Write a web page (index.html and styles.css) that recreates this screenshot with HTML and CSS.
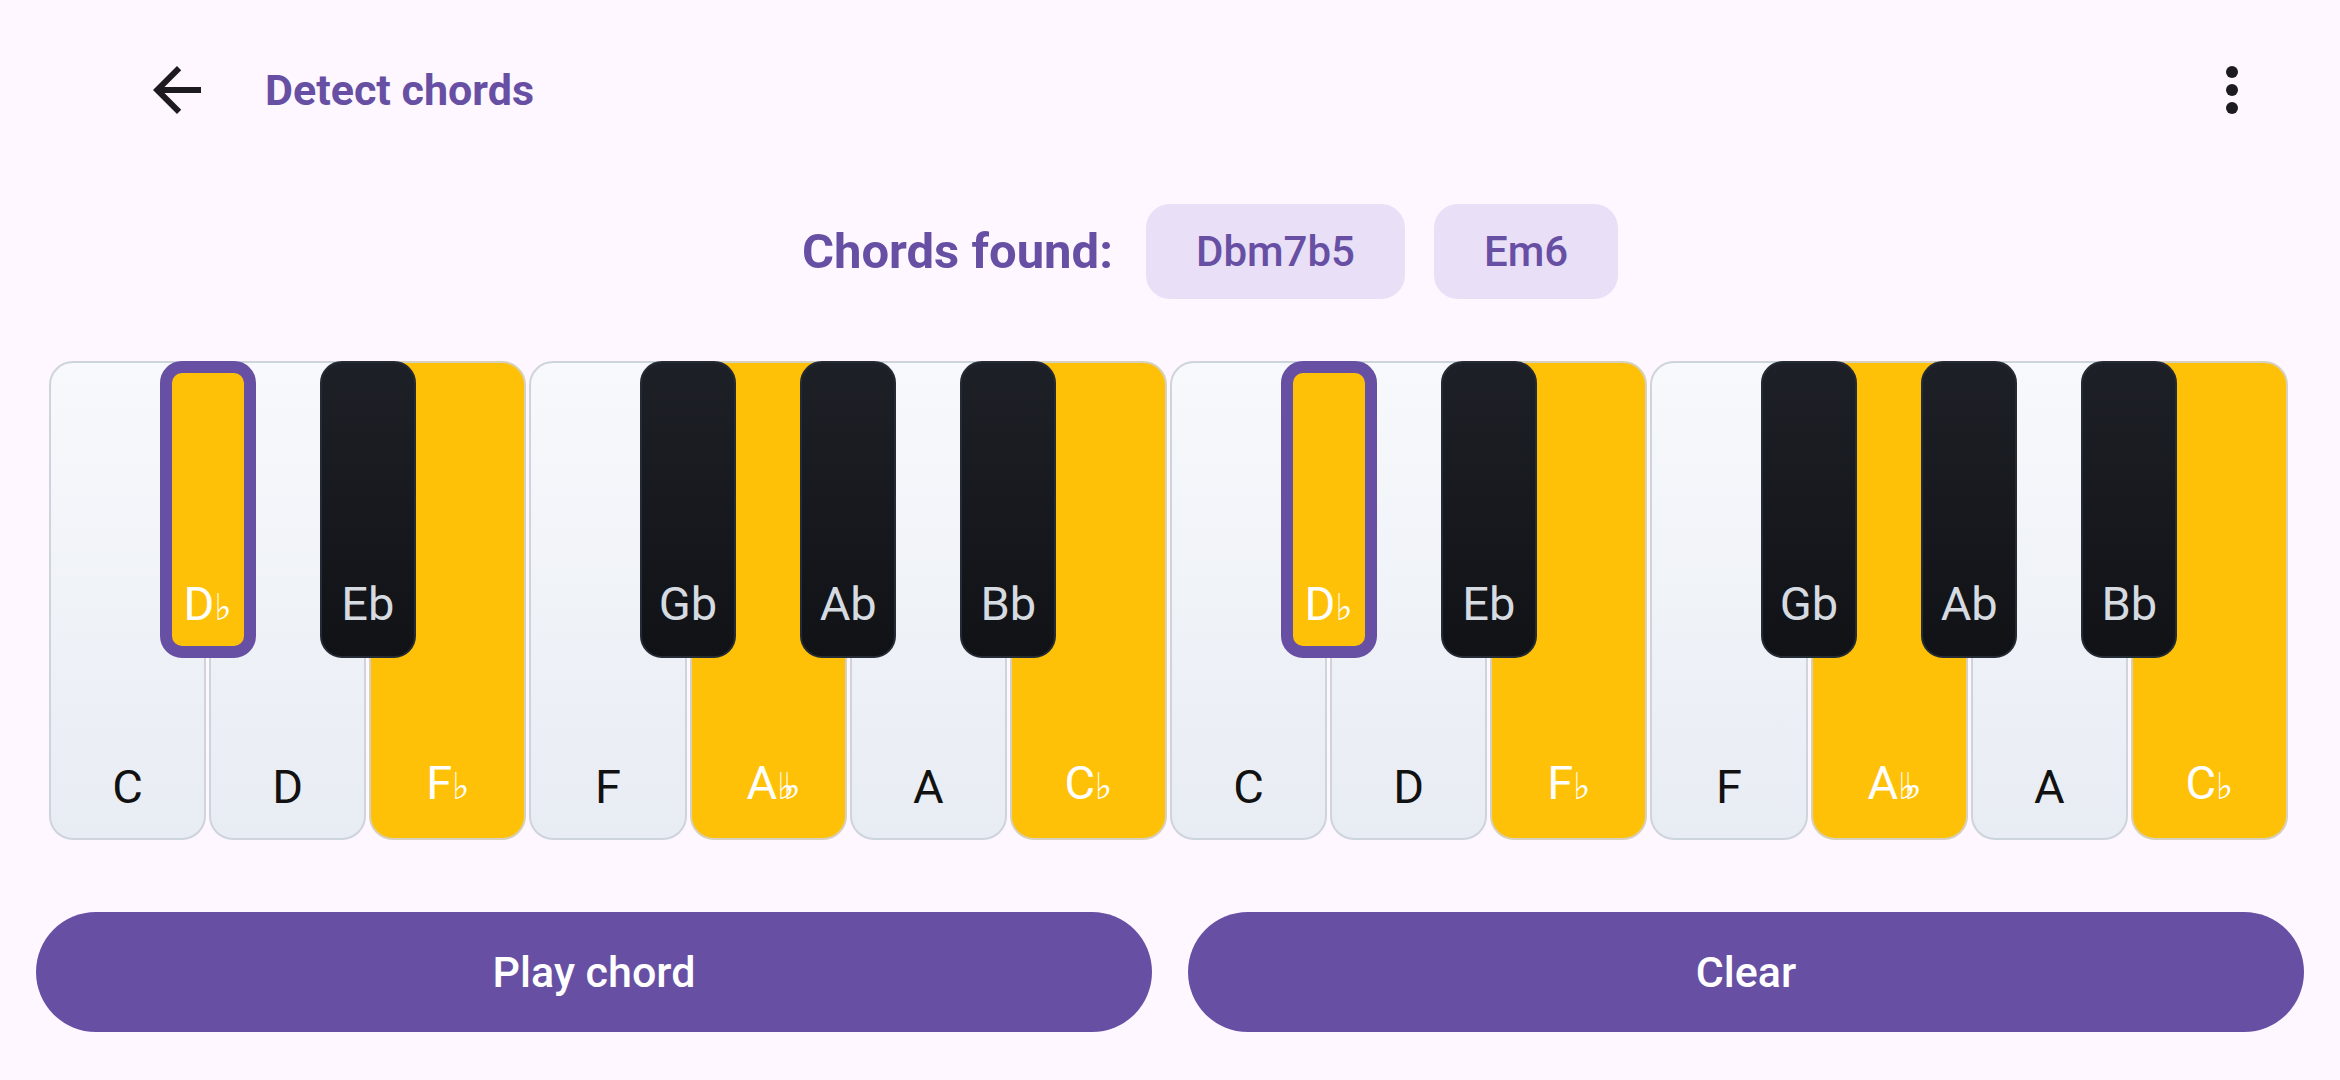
FILE: index.html
```html
<!DOCTYPE html>
<html lang="en">
<head>
<meta charset="utf-8">
<title>Detect chords</title>
<link rel="stylesheet" href="styles.css">
</head>
<body>
<header class="topbar">
  <button class="icon-btn" aria-label="Back">
    <svg viewBox="0 0 24 24"><path d="M20 11H7.83l5.59-5.59L12 4l-8 8 8 8 1.41-1.41L7.83 13H20v-2z"/></svg>
  </button>
  <h1 class="title">Detect chords</h1>
  <span class="spacer"></span>
  <button class="icon-btn" aria-label="More options">
    <svg viewBox="0 0 24 24"><circle cx="12" cy="6" r="2"/><circle cx="12" cy="12" r="2"/><circle cx="12" cy="18" r="2"/></svg>
  </button>
</header>
<main class="content">
  <div class="found">
    <span class="found-label">Chords found:</span>
    <span class="chip">Dbm7b5</span>
    <span class="chip">Em6</span>
  </div>
  <div class="keyboard">
    <div class="white"><span class="label">C</span><div class="black on"><span class="label">D<span class="acc">♭</span></span></div></div>
    <div class="white"><span class="label">D</span><div class="black"><span class="label">Eb</span></div></div>
    <div class="white on"><span class="label">F<span class="acc">♭</span></span></div>
    <div class="white"><span class="label">F</span><div class="black"><span class="label">Gb</span></div></div>
    <div class="white on"><span class="label">A<span class="acc dbl">♭♭</span></span><div class="black"><span class="label">Ab</span></div></div>
    <div class="white"><span class="label">A</span><div class="black"><span class="label">Bb</span></div></div>
    <div class="white on"><span class="label">C<span class="acc">♭</span></span></div>
    <div class="white"><span class="label">C</span><div class="black on"><span class="label">D<span class="acc">♭</span></span></div></div>
    <div class="white"><span class="label">D</span><div class="black"><span class="label">Eb</span></div></div>
    <div class="white on"><span class="label">F<span class="acc">♭</span></span></div>
    <div class="white"><span class="label">F</span><div class="black"><span class="label">Gb</span></div></div>
    <div class="white on"><span class="label">A<span class="acc dbl">♭♭</span></span><div class="black"><span class="label">Ab</span></div></div>
    <div class="white"><span class="label">A</span><div class="black"><span class="label">Bb</span></div></div>
    <div class="white on"><span class="label">C<span class="acc">♭</span></span></div>
  </div>
  <div class="buttons">
    <button class="btn">Play chord</button>
    <button class="btn">Clear</button>
  </div>
</main>
</body>
</html>
```
FILE: styles.css
```css
html, body {
  margin: 0;
  padding: 0;
}
body {
  width: 2340px;
  height: 1080px;
  overflow: hidden;
  background: #FEF7FF;
  font-family: Roboto, "Noto Sans", "DejaVu Sans", sans-serif;
}
.topbar {
  display: flex;
  align-items: center;
  height: 180px;
  padding: 0 72px 0 141px;
  box-sizing: border-box;
}
.icon-btn {
  width: 72px;
  height: 72px;
  padding: 0;
  border: 0;
  background: none;
  display: flex;
}
.icon-btn svg {
  width: 72px;
  height: 72px;
  fill: #1D1B20;
}
.title {
  margin: 0 0 0 52px;
  font-size: 43px;
  line-height: 1;
  font-weight: 700;
  color: #6750A4;
}
.spacer {
  flex: 1;
}
.content {
  padding: 0 36px;
}
.found {
  display: flex;
  align-items: center;
  justify-content: center;
  gap: 29px;
  height: 95px;
  margin-top: 24px;
  padding-left: 80px;
}
.found-label {
  font-size: 49px;
  font-weight: 700;
  color: #6750A4;
  margin-right: 4px;
}
.chip {
  height: 95px;
  padding: 0 50px;
  display: flex;
  align-items: center;
  border-radius: 24px;
  background: #E9DFF6;
  color: #6750A4;
  font-size: 42px;
  font-weight: 500;
}
.keyboard {
  display: flex;
  gap: 3px;
  height: 479px;
  margin: 62px 16px 0 13px;
}
.white {
  flex: 1;
  position: relative;
  box-sizing: border-box;
  border: 2px solid #CED4DC;
  border-radius: 24px;
  background: linear-gradient(#F7F9FC, #E8ECF3);
  display: flex;
  align-items: flex-end;
  justify-content: center;
  padding-bottom: 28px;
  font-size: 47px;
  line-height: 47px;
  color: #111111;
}
.white.on {
  background: #FFC107;
  border-color: #D6D0BC;
  color: #FFFFFF;
}
.black {
  position: absolute;
  z-index: 1;
  top: -2px;
  right: -51.5px;
  width: 96px;
  height: 297px;
  box-sizing: border-box;
  border: 2px solid #252B34;
  border-radius: 22px;
  background: linear-gradient(#1D2026, #101216);
  display: flex;
  align-items: flex-end;
  justify-content: center;
  padding-bottom: 29px;
  color: #D6DAE1;
}
.black.on {
  border: 12px solid #6750A4;
  background: #FFC107;
  color: #FFFFFF;
  padding-bottom: 15px;
}
.label {
  white-space: nowrap;
}
.acc {
  font-family: "DejaVu Sans", sans-serif;
  font-size: 0.78em;
}
.acc.dbl {
  letter-spacing: -0.3em;
}
.buttons {
  display: flex;
  gap: 36px;
  margin-top: 72px;
}
.btn {
  flex: 1;
  height: 120px;
  border: 0;
  border-radius: 60px;
  background: #6750A4;
  color: #FFFFFF;
  font-family: Roboto, "Noto Sans", sans-serif;
  font-size: 43px;
  font-weight: 500;
}
```
